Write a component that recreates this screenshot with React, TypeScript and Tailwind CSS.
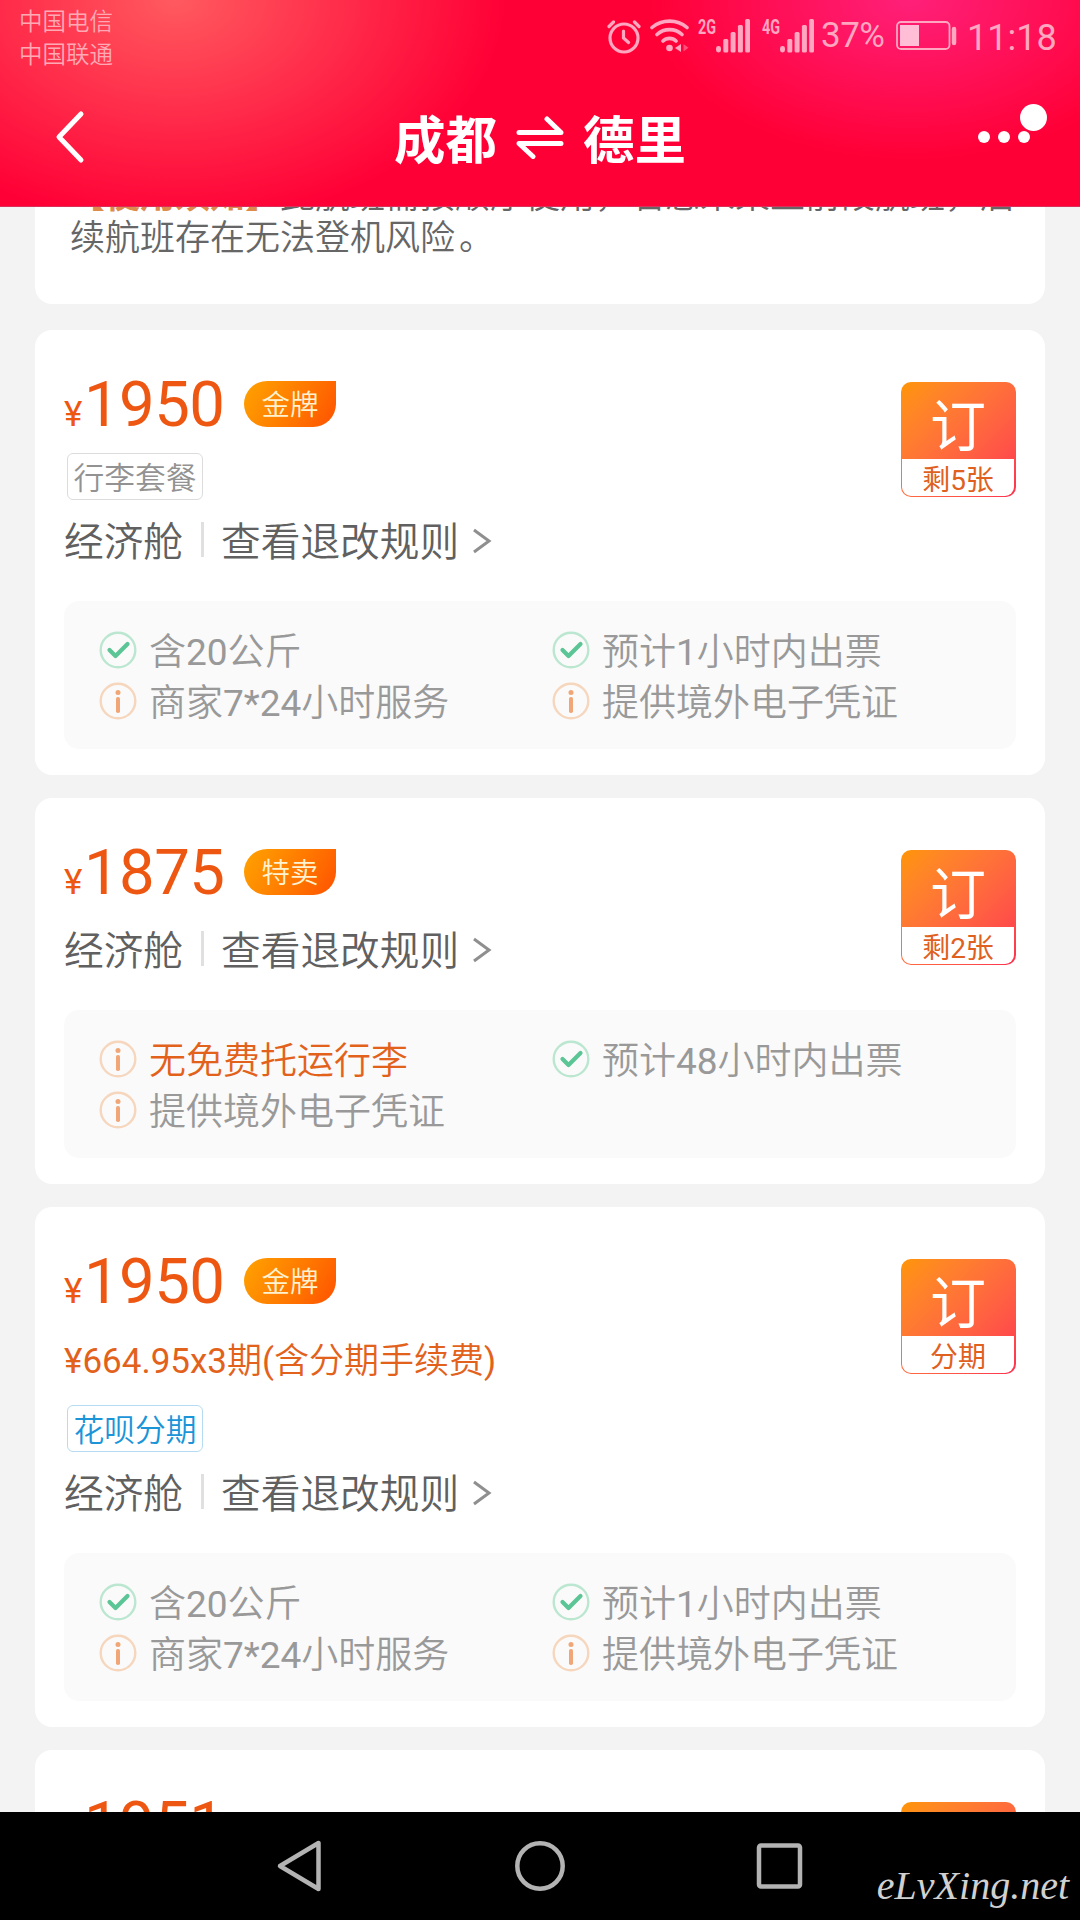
import type { ReactNode } from 'react';

type Feature = { ok?: boolean; warn?: boolean; text: string };

type Offer = {
  price: string;
  badge: string;
  installment?: string;
  tag?: { text: string; blue?: boolean };
  left: string;
  features: Feature[];
};

const offers: Offer[] = [
  {
    price: '1950',
    badge: '金牌',
    tag: { text: '行李套餐' },
    left: '剩5张',
    features: [
      { ok: true, text: '含20公斤' },
      { ok: true, text: '预计1小时内出票' },
      { text: '商家7*24小时服务' },
      { text: '提供境外电子凭证' },
    ],
  },
  {
    price: '1875',
    badge: '特卖',
    left: '剩2张',
    features: [
      { warn: true, text: '无免费托运行李' },
      { ok: true, text: '预计48小时内出票' },
      { text: '提供境外电子凭证' },
    ],
  },
  {
    price: '1950',
    badge: '金牌',
    installment: '¥664.95x3期(含分期手续费)',
    tag: { text: '花呗分期', blue: true },
    left: '分期',
    features: [
      { ok: true, text: '含20公斤' },
      { ok: true, text: '预计1小时内出票' },
      { text: '商家7*24小时服务' },
      { text: '提供境外电子凭证' },
    ],
  },
];

// Chinese in demi-light, digits and latin in regular
function MixedText({ text }: { text: string }) {
  return (
    <>
      {text.split(/([\x21-\x7e¥]+)/).map((part, i) =>
        i % 2 ? (
          <span key={i} className="font-normal">
            {part}
          </span>
        ) : (
          part
        ),
      )}
    </>
  );
}

function SignalBars() {
  return (
    <svg width="34" height="34" viewBox="0 0 34 34" fill="currentColor">
      <rect x="0" y="27" width="5" height="6.5" rx="2.4" />
      <rect x="7.3" y="20" width="5" height="13.5" rx="1.5" />
      <rect x="14.6" y="13" width="5" height="20.5" rx="1.5" />
      <rect x="21.9" y="6" width="5" height="27.5" rx="1.5" />
      <rect x="29.2" y="0" width="4.8" height="33.5" rx="1.5" />
    </svg>
  );
}

function StatusBar() {
  return (
    <div className="flex h-[72px] items-start justify-between pl-[19px] pr-[23px] text-[#ffa6c0]">
      <div className="flex flex-col pt-[6px] text-[23.5px] leading-[33px] font-[350] text-[#ffa9b5]">
        <span>中国电信</span>
        <span>中国联通</span>
      </div>
      <div className="flex items-start pt-[19px]">
        <svg width="34" height="36" viewBox="0 0 34 36" fill="none" stroke="currentColor" strokeWidth="3.2" strokeLinecap="round">
          <circle cx="17" cy="19" r="14" />
          <path d="M16.5 12v7l5 4.500M2 7.5 6.500 3M32 7.500 27.500 3" />
        </svg>
        <svg className="ml-[9px]" width="40" height="34" viewBox="0 0 40 34" fill="none" stroke="currentColor" strokeWidth="3.6" strokeLinecap="round">
          <path d="M2 8.500C12 0 27 0 37 8.500M7 15.500C14 9 25 9 32 15.500M13 22C16.500 18.500 22.500 18.500 26 22" />
          <circle cx="19.500" cy="29" r="3.300" fill="currentColor" stroke="none" />
          <path d="M31 25v8l-6-4z" fill="currentColor" stroke="none" />
          <path d="M33.500 25v7.500l5-3.700z" fill="#ff4f7b" stroke="none" />
        </svg>
        <span className="ml-[8px] w-[18px] origin-left scale-x-[0.72] text-[20px] leading-[16px] font-bold">2G</span>
        <SignalBars />
        <span className="ml-[12px] w-[18px] origin-left scale-x-[0.72] text-[20px] leading-[16px] font-bold">4G</span>
        <SignalBars />
        <span className="ml-[7px] w-[67px] text-[35px] leading-[34px] tracking-[-0.5px]">37%</span>
        <svg className="ml-[8px] mt-[2px]" width="62" height="30" viewBox="0 0 62 30" fill="none" stroke="currentColor" strokeWidth="1.800">
          <rect x="1" y="1" width="52.500" height="27" rx="4" />
          <rect x="4" y="4" width="19" height="21" fill="#ffbed6" stroke="none" />
          <path d="M58 8v14" strokeWidth="4.500" strokeLinecap="round" />
        </svg>
        <span className="ml-[9px] mt-[1px] w-[90px] text-[36px] leading-[37px]">11:18</span>
      </div>
    </div>
  );
}

function TitleBar() {
  return (
    <div className="flex h-[133px] items-center pb-[3px] pl-[55px] pr-[32px] text-white">
      <svg width="30" height="54" viewBox="0 0 30 54" fill="none" stroke="currentColor" strokeWidth="5" strokeLinecap="round" strokeLinejoin="round">
        <path d="M26 4 4 27l22 23" />
      </svg>
      <div className="flex flex-1 items-center justify-center gap-[19px] pl-[17px] text-[51.5px] leading-none font-bold">
        <span className="pt-[10px]">成都</span>
        <svg width="48" height="44" viewBox="0 0 48 44" fill="none" stroke="currentColor" strokeWidth="5" strokeLinecap="round" strokeLinejoin="round">
          <path d="M3 17.500H45L31 4M45 28.500H3l14 13" />
        </svg>
        <span className="pt-[10px]">德里</span>
      </div>
      <svg width="70" height="70" viewBox="0 0 70 70" fill="currentColor">
        <circle cx="6" cy="35" r="6" />
        <circle cx="26" cy="35" r="6" />
        <circle cx="46" cy="35" r="6" />
        <circle cx="55.500" cy="15.500" r="13.500" />
      </svg>
    </div>
  );
}

function CheckIcon() {
  return (
    <svg width="38" height="38" viewBox="0 0 38 38" fill="none" strokeLinecap="round" strokeLinejoin="round">
      <circle cx="19" cy="19" r="17.300" stroke="#bbe7d1" strokeWidth="2.400" />
      <path d="m10.500 19 6 6L28.500 13" stroke="#5cc596" strokeWidth="4.200" />
    </svg>
  );
}

function InfoIcon() {
  return (
    <svg width="38" height="38" viewBox="0 0 38 38" fill="none">
      <circle cx="19" cy="19" r="17.300" stroke="#f6d6bd" strokeWidth="2.400" />
      <circle cx="19" cy="10.500" r="2.500" fill="#f0a676" />
      <rect x="17" y="15" width="4" height="16" rx="1.800" fill="#f0a676" />
    </svg>
  );
}

function Card({ children }: { children: ReactNode }) {
  return <div className="shrink-0 rounded-[17px] bg-white px-[29px] pt-[51px] pb-[26px]">{children}</div>;
}

function BookButton({ left }: { left: string }) {
  return (
    <div className="mt-[1px] flex h-[115px] w-[115px] flex-col rounded-[10px] bg-linear-135 from-[#ff9500] to-[#ff2f50] pr-[2px] pb-[1px] pl-[1px]">
      <div className="flex h-[77px] items-center justify-center pt-[13px] text-[56px] leading-none text-white">订</div>
      <div className="flex flex-1 items-center justify-center rounded-b-[9px] bg-white pt-[7px] text-[28px] leading-none text-[#e0601f]">
        {left}
      </div>
    </div>
  );
}

function PriceRow({ price, badge }: { price: string; badge?: string }) {
  return (
    <div className="flex h-[46px] items-center text-[#ee5712]">
      <div className="flex items-baseline pt-[11px] leading-[46px]">
        <span className="w-[20px] text-[35px]">¥</span>
        <span className="w-[160px] text-[63.5px] tracking-[-0.6px]">{price}</span>
      </div>
      {badge && (
        <span className="flex h-[46px] w-[92px] items-center justify-center rounded-l-[23px] rounded-br-[23px] bg-linear-120 from-[#ffa200] to-[#ff5000] pt-[4px] text-[28.5px] font-[350] text-[#fff2cf]">
          {badge}
        </span>
      )}
    </div>
  );
}

function OfferCard({ offer }: { offer: Offer }) {
  const { price, badge, installment, tag, left, features } = offer;

  return (
    <Card>
      <div className="flex items-start justify-between">
        <div className="flex flex-col items-start">
          <PriceRow price={price} badge={badge} />
          {installment && (
            <div className="mt-[37px] h-[38px] text-[35px] leading-[42px] font-[350] text-[#e2621c]">
              <MixedText text={installment} />
            </div>
          )}
          {tag && (
            <span
              className={`mt-[26px] ml-[3px] flex h-[47px] w-[136px] items-center justify-center rounded-[6px] border pt-[5px] text-[30.8px] leading-none font-[350] ${
                tag.blue ? 'border-[#b5dcf3] text-[#1c94d8]' : 'border-[#dcdcdc] text-[#929292]'
              }`}
            >
              {tag.text}
            </span>
          )}
          <div className={`flex h-[40px] items-center text-[39.7px] leading-none font-[350] text-[#606060] ${tag ? 'mt-[21px]' : 'mt-[35px]'}`}>
            <span className="pt-[4px]">经济舱</span>
            <span className="mt-[-4px] ml-[18px] mr-[17px] h-[35px] w-[3px] bg-[#e0e0e0]" />
            <span className="pt-[4px]">查看退改规则</span>
            <svg className="ml-[13px]" width="20" height="26" viewBox="0 0 20 26" fill="none" stroke="#8f8f8f" strokeWidth="3">
              <path d="m2 2 15 11L2 24" />
            </svg>
          </div>
        </div>
        <BookButton left={left} />
      </div>
      <div className="mt-[40px] grid h-[148px] grid-cols-[453px_1fr] content-start rounded-[15px] bg-[#fafafa] py-[23px] pl-[35px]">
        {features.map((f) => (
          <div key={f.text} className={`flex h-[51px] items-center gap-[12px] text-[37px] leading-none ${f.warn ? 'text-[#e2621c]' : 'text-[#999]'}`}>
            {f.ok ? <CheckIcon /> : <InfoIcon />}
            <span className="pt-[6px] font-[350]">
              <MixedText text={f.text} />
            </span>
          </div>
        ))}
      </div>
    </Card>
  );
}

function NavBar() {
  return (
    <div className="relative flex h-[108px] shrink-0 items-center justify-center gap-[184px] bg-black text-[#b3b3b3]">
      <svg width="56" height="56" viewBox="0 0 56 56" fill="none" stroke="currentColor" strokeWidth="4.500" strokeLinejoin="round">
        <path d="M8 28 46.500 5v46z" />
      </svg>
      <svg width="56" height="56" viewBox="0 0 56 56" fill="none" stroke="currentColor" strokeWidth="4.500">
        <circle cx="28" cy="28" r="22.700" />
      </svg>
      <svg width="56" height="56" viewBox="0 0 56 56" fill="none" stroke="currentColor" strokeWidth="4.500">
        <rect x="7" y="7.500" width="41" height="41" rx="2" />
      </svg>
      <span className="absolute right-[11px] bottom-[14px] font-['Liberation_Serif',serif] text-[40px] leading-none italic text-[#d0d0d0]">
        eLvXing.net
      </span>
    </div>
  );
}

export default function App() {
  return (
    <div className="flex h-[1920px] w-[1080px] flex-col overflow-hidden bg-[#f3f3f3] font-[Roboto,'Noto_Sans_CJK_SC',sans-serif]">
      <header className="h-[207px] shrink-0 border-b border-[#d9305a] bg-[radial-gradient(ellipse_330px_225px_at_175px_0px,#ff5a5f,transparent),radial-gradient(ellipse_260px_160px_at_910px_0px,#ff2079,transparent)] bg-[#ff0036]">
        <StatusBar />
        <TitleBar />
      </header>
      <main className="flex min-h-0 flex-1 flex-col gap-[23px] overflow-hidden px-[35px]">
        <div className="mb-[3px] flex h-[97px] shrink-0 flex-col justify-end overflow-hidden rounded-b-[17px] bg-white px-[35px] pb-[44px] text-[35px] leading-[42px] font-[350] text-[#666]">
          <p className="w-[940px] whitespace-nowrap">
            <b className="font-bold text-[#dd8a4a]">【使用须知】</b>此航班需按顺序使用，若您未乘坐前段航班，后
          </p>
          <p>
            续航班存在无法登机风险<span className="ml-[4px]">。</span>
          </p>
        </div>
        {offers.map((offer, i) => (
          <OfferCard key={i} offer={offer} />
        ))}
        <Card>
          <div className="flex items-start justify-between">
            <PriceRow price="1951" />
            <BookButton left="分期" />
          </div>
        </Card>
      </main>
      <NavBar />
    </div>
  );
}
